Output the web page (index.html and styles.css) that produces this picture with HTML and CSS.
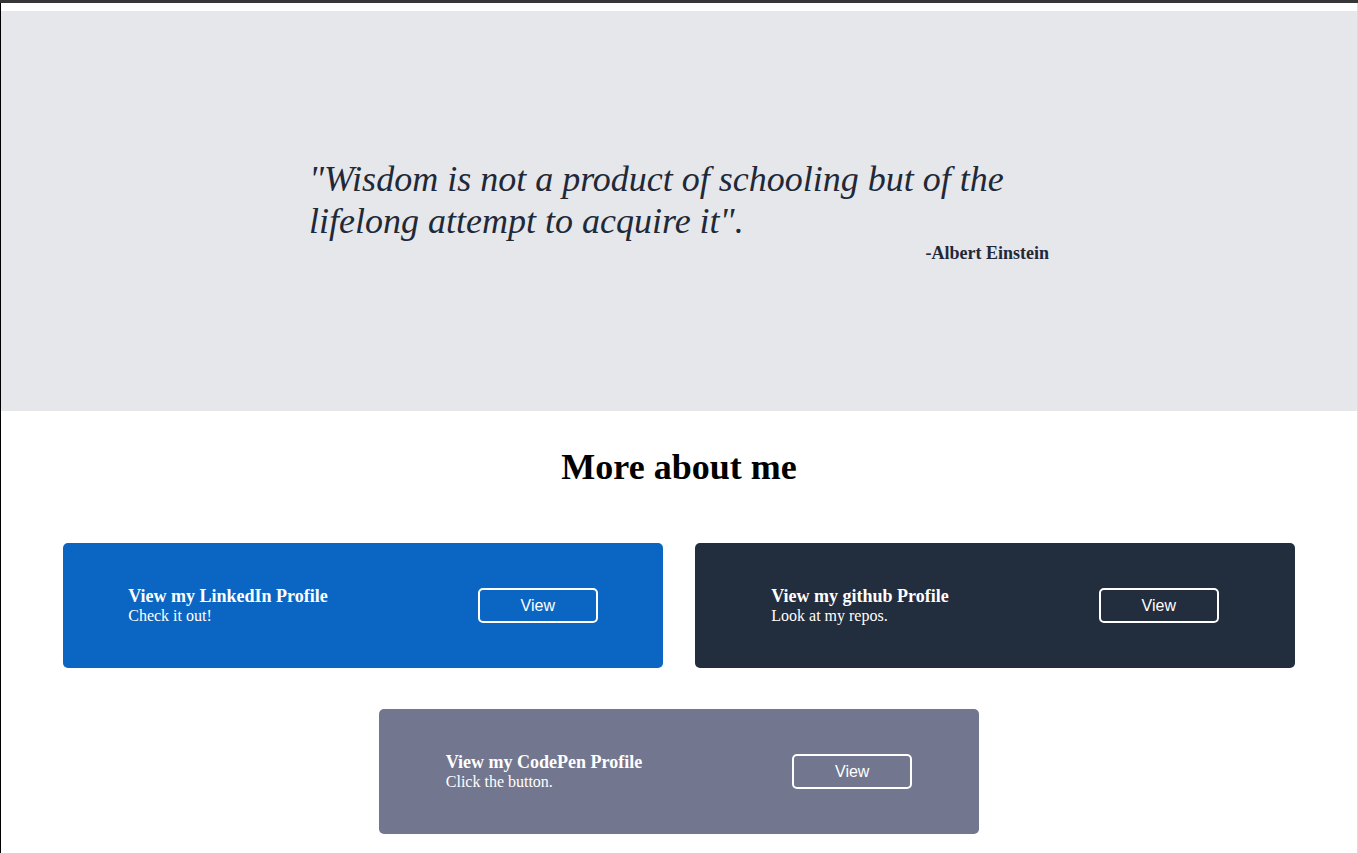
FILE: index.html
```html
<!DOCTYPE html>
<html lang="en">
<head>
<meta charset="utf-8">
<title>More about me</title>
<link rel="stylesheet" href="styles.css">
</head>
<body>
<div class="topbar"></div>
<div class="page">
  <section class="hero">
    <div class="quote-wrap">
      <p class="quote">"Wisdom is not a product of schooling but of the lifelong attempt to acquire it".</p>
      <p class="author">-Albert Einstein</p>
    </div>
  </section>
  <section class="more">
    <h2 class="more-title">More about me</h2>
    <div class="cards">
      <div class="card card-linkedin">
        <div class="card-text">
          <div class="card-title">View my LinkedIn Profile</div>
          <div class="card-sub">Check it out!</div>
        </div>
        <button class="card-btn">View</button>
      </div>
      <div class="card card-github">
        <div class="card-text">
          <div class="card-title">View my github Profile</div>
          <div class="card-sub">Look at my repos.</div>
        </div>
        <button class="card-btn">View</button>
      </div>
      <div class="card card-codepen">
        <div class="card-text">
          <div class="card-title">View my CodePen Profile</div>
          <div class="card-sub">Click the button.</div>
        </div>
        <button class="card-btn">View</button>
      </div>
    </div>
  </section>
</div>
</body>
</html>
```

FILE: styles.css
```css
html, body {
  margin: 0;
  padding: 0;
  background: #ffffff;
}

body {
  font-family: "Liberation Serif", "Times New Roman", serif;
  overflow: hidden;
}

.topbar {
  height: 3px;
  background: #363636;
}

.page {
  border-left: 1px solid #000000;
  border-right: 1px solid #dcdcdc;
  padding-top: 8px;
  min-height: 900px;
}

.hero {
  height: 400px;
  background: #e5e7eb;
  display: flex;
  align-items: center;
  justify-content: center;
}

.quote-wrap {
  width: 740px;
  color: #1f2937;
}

.quote {
  margin: 0;
  font-style: italic;
  font-size: 36px;
  line-height: 1.15;
}

.author {
  margin: 1px 0 -1px;
  text-align: right;
  font-weight: bold;
  font-size: 18px;
  line-height: 1.15;
}

.more {
  padding-top: 36px;
}

.more-title {
  margin: 0 0 55px;
  text-align: center;
  font-size: 36px;
  line-height: 1.15;
  font-weight: bold;
  color: #000000;
}

.cards {
  display: flex;
  flex-wrap: wrap;
  justify-content: center;
  column-gap: 32px;
  row-gap: 41px;
}

.card {
  width: 600px;
  height: 125px;
  border-radius: 5px;
  display: flex;
  align-items: center;
  justify-content: center;
  gap: 150px;
  color: #ffffff;
  box-sizing: border-box;
}

.card-linkedin { background: #0a66c2; }
.card-github { background: #222d3e; }
.card-codepen { background: #72768f; }

.card-title {
  font-weight: bold;
  font-size: 18px;
  line-height: 1.15;
}

.card-sub {
  font-size: 16px;
  line-height: 1.15;
}

.card-btn {
  width: 120px;
  height: 35px;
  background: transparent;
  border: 2px solid #ffffff;
  border-radius: 5px;
  color: #ffffff;
  font-family: "Liberation Sans", Arial, sans-serif;
  font-size: 16px;
  padding: 0;
}
```
